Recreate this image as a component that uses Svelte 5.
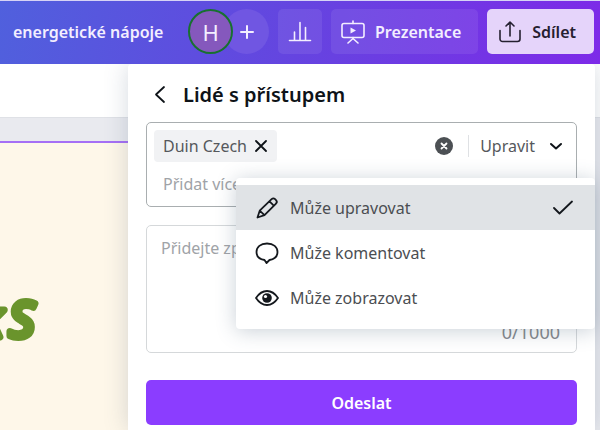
<script lang="ts">
    type Access = {
        id: string;
        label: string;
    };

    const options: Access[] = [
        { id: "edit", label: "Může upravovat" },
        { id: "comment", label: "Může komentovat" },
        { id: "view", label: "Může zobrazovat" },
    ];

    let selected = $state("edit");
    let open = $state(true);
    let people = $state(["Duin Czech"]);
    let query = $state("");
    let message = $state("");

    function choose(id: string) {
        selected = id;
        open = false;
    }
</script>

<div class="editor">
    <header class="topbar">
        <span class="doc-title">energetické nápoje</span>
        <div class="members">
            <button class="avatar" aria-label="Účet H">H</button>
            <button class="add" aria-label="Přidat členy">
                <svg width="16" height="16" viewBox="0 0 16 16"><path d="M8 2v12M2 8h12" /></svg>
            </button>
        </div>
        <button class="tool stats" aria-label="Statistiky">
            <svg width="24" height="24" viewBox="0 0 24 24"><path d="M1.5 20.5h21M6.500 20v-8M12 20V2.500M17.500 20V7.500" /></svg>
        </button>
        <button class="tool">
            <svg width="24" height="24" viewBox="0 0 24 24">
                <rect x="1" y="3.500" width="22" height="14" rx="2" />
                <path d="M12 1v2.500M12 17.500v1.500M7 23l5-4.500 5 4.500" />
                <path class="solid" d="M9.500 7.500v6l5.500-3z" />
            </svg>
            Prezentace
        </button>
        <button class="tool share">
            <svg width="24" height="24" viewBox="0 0 24 24"><path d="M2 10.500V19a2.500 2.500 0 0 0 2.500 2.500h15A2.500 2.500 0 0 0 22 19v-8.500M12 16V2M8 6l4-4 4 4" /></svg>
            Sdílet
        </button>
    </header>

    <main class="workspace">
        <div class="toolbar"></div>
        <div class="page">
            <svg class="headline" width="60" height="80" viewBox="0 0 60 80">
                <text x="-22" y="58">k</text>
                <text x="9" y="58">S</text>
            </svg>
        </div>
    </main>

    <section class="panel" aria-labelledby="panel-title">
        <div class="panel-head">
            <button class="icon-btn" aria-label="Zpět">
                <svg width="12" height="20" viewBox="0 0 12 20"><path d="M10 3L2 10.500l8 7.500" /></svg>
            </button>
            <h2 id="panel-title">Lidé s přístupem</h2>
        </div>

        <div class="people">
            <div class="people-row">
                {#each people as person}
                    <span class="chip">
                        {person}
                        <button class="icon-btn" aria-label="Odebrat {person}" onclick={() => (people = people.filter((p) => p !== person))}>
                            <svg width="14" height="12" viewBox="0 0 14 12"><path d="M2 1l10 10M12 1L2 11" /></svg>
                        </button>
                    </span>
                {/each}
                <button class="icon-btn clear" aria-label="Vymazat vše" onclick={() => (people = [])}>
                    <svg width="18" height="18" viewBox="0 0 18 18">
                        <circle cx="9" cy="9" r="9" />
                        <path d="M6.500 6.500l5 5M11.500 6.500l-5 5" />
                    </svg>
                </button>
                <button class="role" aria-haspopup="menu" aria-expanded={open} onclick={() => (open = !open)}>
                    Upravit
                    <svg width="14" height="14" viewBox="0 0 14 14"><path d="M2 5l5 4.500L12 5" /></svg>
                </button>
            </div>
            <input type="text" aria-label="Přidat více lidí" placeholder="Přidat více lidí" bind:value={query} />

            {#if open}
                <div class="menu" role="menu">
                    {#each options as option}
                        <button class="option" class:active={option.id === selected} role="menuitemradio" aria-checked={option.id === selected} onclick={() => choose(option.id)}>
                            <svg width="24" height="24" viewBox="0 0 24 24">
                                {#if option.id === "edit"}
                                    <path d="M2.500 21.500l2.200-6.800L16.600 3.200a2.500 2.500 0 0 1 3.500 0l.9.9a2.500 2.500 0 0 1 0 3.500L9.500 19.100zM4.700 14.700l4.800 4.400M14.500 5.300l4.300 4.300" />
                                {:else if option.id === "comment"}
                                    <path d="M9.500 19C4.500 18.200 1.500 15.100 1.500 11 1.500 6 5.500 2.500 12 2.500s10.500 3.500 10.500 8.500c0 4.100-3.200 7.200-8 8L11.500 22z" />
                                {:else}
                                    <path d="M1 12c3-4.500 6.500-7 11-7s8 2.500 11 7c-3 4.500-6.500 7-11 7s-8-2.500-11-7z" />
                                    <circle cx="12" cy="12" r="4.800" />
                                    <circle class="glint" cx="10.500" cy="10.500" r="1.600" />
                                {/if}
                            </svg>
                            <span>{option.label}</span>
                            {#if option.id === selected}
                                <svg class="check" width="20" height="16" viewBox="0 0 20 16"><path d="M1 8l5.500 5.500L19 1.500" /></svg>
                            {/if}
                        </button>
                    {/each}
                </div>
            {/if}
        </div>

        <div class="message">
            <textarea aria-label="Zpráva" placeholder="Přidejte zprávu" maxlength="1000" bind:value={message}></textarea>
            <span class="count">{message.length}/1000</span>
        </div>

        <button class="send">Odeslat</button>
    </section>
</div>

<style>
    :global(body) {
        font-family: "Noto Sans", "Open Sans", sans-serif;
        font-size: 16px;
        color: #0e1318;
    }

    button {
        padding: 0;
        border: 0;
        background: none;
        color: inherit;
        font: inherit;
        cursor: pointer;
    }

    svg {
        flex: none;
        display: block;
        fill: none;
        stroke: currentColor;
        stroke-width: 2;
        stroke-linejoin: round;
        stroke-linecap: round;
    }

    .editor {
        position: relative;
        display: flex;
        flex-direction: column;
        min-height: 100vh;
        overflow: hidden;
        background: #e9eaef;
    }

    .topbar {
        box-sizing: border-box;
        height: 64px;
        padding: 0 6px 2px 13px;
        display: flex;
        align-items: center;
        gap: 9px;
        border-top: 1px solid #d6d3f5;
        background: linear-gradient(100deg, #5060dd, #6544e0 50%, #7d2ae8);
        color: #f3eeff;
        font-weight: 600;
    }

    .doc-title {
        flex: 1;
        white-space: nowrap;
    }

    .members {
        display: flex;
    }

    .avatar,
    .add {
        box-sizing: border-box;
        width: 45px;
        height: 45px;
        display: grid;
        place-items: center;
        border-radius: 50%;
    }

    .avatar {
        position: relative;
        z-index: 1;
        border: 2px solid #18702f;
        background: #8558bd;
        font-size: 22px;
        font-weight: 400;
    }

    .add {
        margin-left: -9px;
        background: #7056e2;
    }

    .tool {
        height: 45px;
        padding: 0 17px 0 10px;
        display: flex;
        align-items: center;
        gap: 10px;
        border-radius: 5px;
        background: #ffffff14;
        font-weight: 600;
    }

    .tool svg {
        stroke-width: 1.6;
    }

    .tool .solid {
        fill: currentColor;
        stroke: none;
    }

    .tool.stats {
        padding: 0 10px;
    }

    .tool.share {
        padding: 0 18px 0 11px;
        background: #e5d4fa;
        color: #252030;
    }

    .workspace {
        flex: 1;
        display: flex;
        flex-direction: column;
    }

    .toolbar {
        height: 54px;
        margin-bottom: 23px;
        border-bottom: 1px solid #dfe1e6;
        box-sizing: border-box;
        background: #fff;
    }

    .page {
        flex: 1;
        margin-right: 20px;
        padding-top: 136px;
        border-top: 2px solid #a56ff5;
        background: #fef7e9;
    }

    .headline {
        fill: #6a942c;
        stroke: #6a942c;
        stroke-width: 7;
        font-size: 50px;
        font-style: italic;
        font-weight: 400;
    }

    .panel {
        position: absolute;
        top: 64px;
        right: 5px;
        bottom: 0;
        left: 128px;
        padding: 0 18px;
        display: flex;
        flex-direction: column;
        background: #fff;
        border-radius: 4px 4px 0 0;
        box-shadow: 0 0 24px #40577038;
        clip-path: inset(0 -40px -40px -40px);
    }

    .panel-head {
        height: 58px;
        padding: 2px 8px 0;
        display: flex;
        align-items: center;
        gap: 17px;
        box-sizing: border-box;
    }

    .icon-btn svg {
        stroke-width: 1.8;
    }

    h2 {
        margin: 0;
        font-size: 20px;
        font-weight: 600;
        white-space: nowrap;
    }

    .people {
        position: relative;
        box-sizing: border-box;
        height: 85px;
        padding: 7px;
        border: 1px solid #a9aeb0;
        border-radius: 5px;
    }

    .people-row {
        display: flex;
        align-items: center;
    }

    .chip {
        height: 32px;
        padding: 0 9px;
        display: flex;
        align-items: center;
        gap: 7px;
        border-radius: 4px;
        background: #f1f2f4;
        color: #55585c;
    }

    .chip button {
        color: #0e1318;
    }

    .clear {
        margin-left: auto;
    }

    .clear circle {
        fill: #4c5054;
        stroke: none;
    }

    .clear path {
        stroke: #fff;
    }

    .role {
        height: 22px;
        margin-left: 15px;
        padding: 0 6px 0 11px;
        display: flex;
        align-items: center;
        gap: 14px;
        border-left: 1px solid #dfe1e4;
        color: #55585c;
    }

    .role svg {
        color: #0e1318;
    }

    input,
    textarea {
        padding: 0;
        border: 0;
        outline: 0;
        background: none;
        color: #0e1318;
        font: inherit;
    }

    input {
        width: 100%;
        height: 24px;
        margin-top: 10px;
        padding-left: 9px;
        box-sizing: border-box;
    }

    input::placeholder,
    textarea::placeholder {
        color: #a0a3a7;
    }

    .menu {
        position: absolute;
        z-index: 2;
        top: 55px;
        right: -19px;
        left: 89px;
        padding: 7px 0 9px;
        border-radius: 4px;
        background: #fff;
        box-shadow: 0 2px 20px #40577048;
    }

    .option {
        width: 100%;
        height: 45px;
        padding: 0 22px 0 19px;
        display: flex;
        align-items: center;
        gap: 11px;
        color: #4b4e52;
    }

    .option svg {
        color: #14181d;
        stroke-width: 1.8;
    }

    .option circle {
        fill: currentColor;
        stroke: none;
    }

    .option .glint {
        fill: #fff;
    }

    .option.active {
        background: #e0e3e6;
    }

    .option .check {
        margin-left: auto;
    }

    .message {
        box-sizing: border-box;
        height: 128px;
        margin-top: 18px;
        padding: 11px 16px 8px 14px;
        display: flex;
        flex-direction: column;
        border: 1px solid #d5d8da;
        border-radius: 5px;
    }

    .message textarea {
        flex: 1;
        resize: none;
    }

    .count {
        align-self: flex-end;
        color: #85888c;
        font-size: 18px;
    }

    .send {
        height: 45px;
        margin-top: 27px;
        flex: none;
        border-radius: 5px;
        background: #8b3dff;
        color: #fff;
        font-weight: 600;
    }
</style>
